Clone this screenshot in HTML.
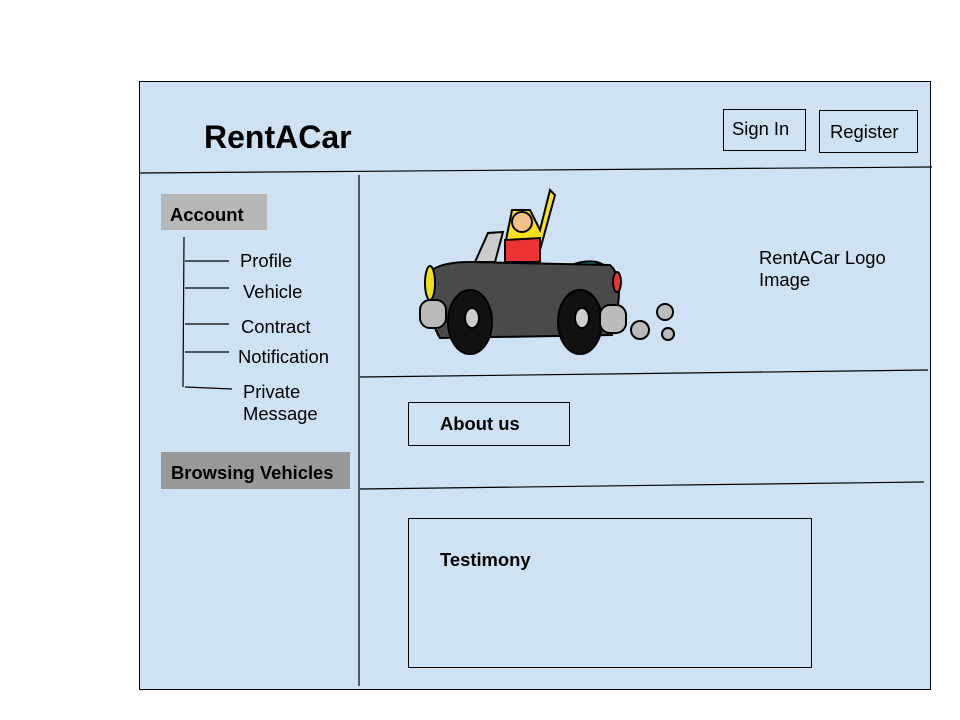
<!DOCTYPE html>
<html><head><meta charset="utf-8"><style>
body{margin:0;width:960px;height:720px;background:#fff;position:relative;overflow:hidden;font-family:"Liberation Sans",Arial,sans-serif;}
.a{position:absolute;}
.t{position:absolute;font-size:18.4px;color:#000;white-space:nowrap;line-height:22px;}
.b{font-weight:bold;}
</style></head><body>
<div class="a" style="left:139px;top:81px;width:790px;height:607px;background:#cfe2f3;border:1px solid #000;"></div>
<svg class="a" style="left:0;top:0" width="960" height="720">
<g stroke="#000" stroke-width="1.2" fill="none">
<line x1="140" y1="173" x2="932" y2="167"/>
<line x1="359" y1="175" x2="359" y2="686"/>
<line x1="360" y1="377" x2="928" y2="370"/>
<line x1="360" y1="489" x2="924" y2="482"/>
<line x1="184" y1="237" x2="183" y2="387"/>
<line x1="185" y1="261" x2="229" y2="261"/>
<line x1="185" y1="288" x2="229" y2="288"/>
<line x1="185" y1="324" x2="229" y2="324"/>
<line x1="185" y1="352" x2="229" y2="352"/>
<line x1="185" y1="387" x2="232" y2="389"/>
</g>
<g stroke="#000" stroke-width="2">
<path d="M505 245 L512 210 L530 210 L540 230 L550 190 L555 195 L540 250 Z" fill="#f7e017"/>
<circle cx="522" cy="222" r="10" fill="#f5c08a"/>
<path d="M505 240 L540 238 L540 262 L505 262 Z" fill="#e33"/>
<path d="M475 262 L488 233 L503 232 L495 262 Z" fill="#ccc"/>
<path d="M568 266 Q590 258 602 264 Z" fill="#1a8a8a"/>
<path d="M430 272 Q440 262 470 262 L610 265 Q622 275 618 305 L612 335 L440 338 Q428 320 430 272 Z" fill="#4a4a4a"/>
<ellipse cx="470" cy="322" rx="22" ry="32" fill="#111"/>
<ellipse cx="472" cy="318" rx="7" ry="10" fill="#ccc"/>
<ellipse cx="580" cy="322" rx="22" ry="32" fill="#111"/>
<ellipse cx="582" cy="318" rx="7" ry="10" fill="#ccc"/>
<rect x="420" y="300" width="26" height="28" rx="10" fill="#bbb"/>
<rect x="600" y="305" width="26" height="28" rx="10" fill="#bbb"/>
<ellipse cx="430" cy="283" rx="5" ry="17" fill="#f0e020"/>
<ellipse cx="617" cy="282" rx="4" ry="10" fill="#e33"/>
<circle cx="640" cy="330" r="9" fill="#bbb"/>
<circle cx="665" cy="312" r="8" fill="#bbb"/>
<circle cx="668" cy="334" r="6" fill="#bbb"/>
</g>
</svg>
<div class="t b" style="left:204px;top:119px;font-size:32px;line-height:37px;">RentACar</div>
<div class="a" style="left:723px;top:109px;width:81px;height:40px;border:1px solid #000;"></div>
<div class="t" style="left:732px;top:118px;">Sign In</div>
<div class="a" style="left:819px;top:110px;width:97px;height:41px;border:1px solid #000;"></div>
<div class="t" style="left:830px;top:121px;">Register</div>
<div class="a" style="left:161px;top:194px;width:106px;height:36px;background:#b7b7b7;"></div>
<div class="t b" style="left:170px;top:204px;">Account</div>
<div class="t" style="left:240px;top:250px;">Profile</div>
<div class="t" style="left:243px;top:281px;">Vehicle</div>
<div class="t" style="left:241px;top:316px;">Contract</div>
<div class="t" style="left:238px;top:346px;">Notification</div>
<div class="t" style="left:243px;top:381px;">Private<br>Message</div>
<div class="a" style="left:161px;top:452px;width:189px;height:37px;background:#999;"></div>
<div class="t b" style="left:171px;top:462px;">Browsing Vehicles</div>
<div class="t" style="left:759px;top:247px;">RentACar Logo<br>Image</div>
<div class="a" style="left:408px;top:402px;width:160px;height:42px;border:1px solid #000;"></div>
<div class="t b" style="left:440px;top:413px;">About us</div>
<div class="a" style="left:408px;top:518px;width:402px;height:148px;border:1px solid #000;"></div>
<div class="t b" style="left:440px;top:549px;">Testimony</div>
</body></html>
